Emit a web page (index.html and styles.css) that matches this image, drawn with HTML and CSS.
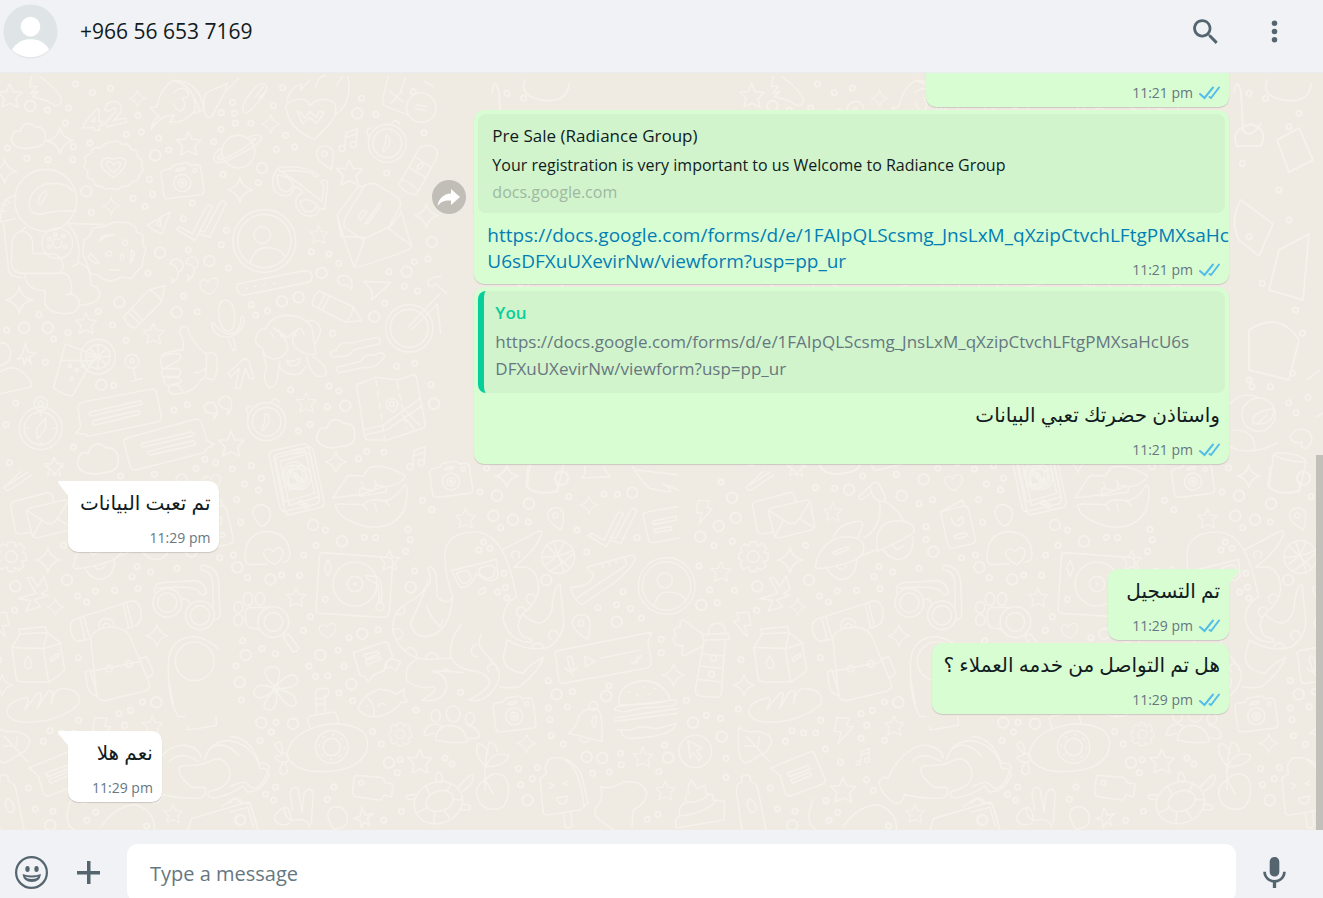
FILE: index.html
```html
<!DOCTYPE html>
<html lang="en">
<head>
  <meta charset="UTF-8" />
  <meta name="viewport" content="width=device-width, initial-scale=1.0"/>
  <title>Chat</title>
  <link rel="stylesheet" href="styles.css">
</head>
<body>
  <!-- shared icons -->
  <svg class="defs" aria-hidden="true">
    <marker id="ring-l" markerUnits="userSpaceOnUse" markerWidth="50" markerHeight="50" viewBox="-25 -25 50 50"><circle r="16" class="ring"/></marker>
    <marker id="ring-s" markerUnits="userSpaceOnUse" markerWidth="30" markerHeight="30" viewBox="-15 -15 30 30"><circle r="8" class="ring"/></marker>
    <symbol id="ticks" viewBox="0 0 21 14">
      <path d="M1 8l4.500 4L14 1.500M10.500 11l1.500 1L20 1.500" fill="none" stroke="#53bdeb" stroke-width="2" stroke-linecap="round"/>
    </symbol>
    <symbol id="star" viewBox="-40 -40 80 80" overflow="visible">
      <path d="M-3-36L8-12 34-10 16 9 22 35-2 23-26 34-20 8-38-11-13-12z"/>
    </symbol>
    <symbol id="spark" viewBox="-40 -40 80 80" overflow="visible">
      <path d="M0-38Q5-8 38 0Q7 6 0 38Q-7 7-38 0Q-6-7 0-38z"/>
    </symbol>
    <symbol id="heart" viewBox="-40 -40 80 80" overflow="visible">
      <path d="M4 30C-14 22-34 8-32-10C-30-26-8-28-2-14C4-32 30-36 34-16C36 2 18 20 4 30z"/>
    </symbol>
    <symbol id="camera" viewBox="-70 -60 140 120" overflow="visible">
      <path d="M-65-20Q-66-32-54-34L-34-38-26-50 16-56 26-48 44-50Q54-50 56-40L66 28Q67 40 56 42L-42 54Q-54 55-56 44zM-20-30Q-18-40 8-40Q10-30-20-30z"/>
      <circle r="26" cy="6"/><circle r="12" cy="6"/><circle r="4" cy="6"/><circle r="6" cx="38" cy="-32"/>
    </symbol>
    <symbol id="bubble" viewBox="-130 -70 260 140" overflow="visible">
      <path d="M-122 -10Q-122-26-106-30L96-68Q112-70 114-56L128 12Q130 26 116 30L-86 72Q-96 74-98 66L-128 64-114 44zM-84 0L66-34Q76-28 66-22L-82 12Q-94 8-84 0zM-76 26L60-4Q68 4 58 8L-74 40Q-82 34-76 26z"/>
    </symbol>
    <symbol id="clock" viewBox="-60 -70 120 140" overflow="visible">
      <circle r="57"/><circle r="43"/><path d="M-4-24Q6-26 8-4Q8 6-12 26Q-18 22-6 2zM-56-20Q-68-46-48-46M16-62Q24-76 38-58"/>
    </symbol>
    <symbol id="phone" viewBox="-80 -100 160 200" overflow="visible">
      <path d="M-72-60Q-74-74-60-78L28-98Q42-100 46-88L78 64Q80 78 68 82L-24 104Q-36 106-40 92zM-54-56L36-80 64 50-26 76zM-8-78L20-84"/><circle cx="2" cy="-8" r="36"/><path d="M-26 30L-28-10A28 28 0 1 1 0 22zM-12-20Q-10 6 16 6L14-4 4-4-4-14-4-22z"/><circle cx="24" cy="78" r="7"/>
    </symbol>
    <symbol id="note" viewBox="-30 -40 60 80" overflow="visible">
      <path d="M-12 24L-8-22 26-34 22 12M-6-8L24-18"/><circle cx="-20" cy="26" r="9"/><circle cx="14" cy="14" r="9"/>
    </symbol>
    <symbol id="profile" viewBox="-95 -95 190 190" overflow="visible">
      <circle r="94"/><circle r="80"/><circle cx="-6" cy="-18" r="25"/><path d="M-42 66Q-30 18 10 20Q50 22 64 48"/>
    </symbol>
    <symbol id="bolt" viewBox="-40 -50 80 100" overflow="visible">
      <path d="M-20-40L20-38 12-12 32-10-16 44-6 6-28 4z"/>
    </symbol>
    <symbol id="glasses" viewBox="-90 -80 180 160" overflow="visible">
      <circle cx="-52" cy="20" r="43"/><circle cx="-52" cy="20" r="29"/><circle cx="46" cy="58" r="43"/><circle cx="46" cy="58" r="29"/>
      <path d="M-12 14Q4 0 16 24M-90-10Q-96-34-70-40L30-46Q66-40 64-6Q52 2 42-14Q32-32-84-24M50-92Q98-92 102-40L106 54Q106 68 90 72M50-92Q44-76 60-76Q82-70 84-40L86 34"/>
    </symbol>
    <symbol id="doublecheck" viewBox="-75 -60 150 120" overflow="visible">
      <path d="M-74 26L-64 18-26 40 18-46Q28-50 34-42L-18 60zM-4 30L10 34 58-56Q68-62 76-52L26 50-4 40"/>
    </symbol>
    <symbol id="pin" viewBox="-30 -40 60 80" overflow="visible">
      <path d="M20 38Q-30 10-24-14Q-18-32 0-32Q26-32 26-4Q26 16 20 38z"/><circle cy="-8" r="8"/>
    </symbol>
    <symbol id="pencil" viewBox="-80 -40 160 80" overflow="visible">
      <path d="M-72-24L40-26 82 0 40 26-72 24Q-84 0-72-24zM40-26Q50 0 40 26M-52-24V24M-38-24V24"/>
    </symbol>
    <symbol id="cloud" viewBox="-50 -40 100 80" overflow="visible">
      <path d="M-32 34Q-56 20-44-2Q-38-18-22-12Q-12-42 12-34Q18-32 22-26Q54-28 54 4Q56 34 18 36Q-12 44-32 34z"/>
    </symbol>
    <symbol id="gear" viewBox="-50 -50 100 100" overflow="visible">
      <path d="M-10-46H10L14-32 28-42 42-26 34-14 46-10V12L32 14 40 30 24 42 12 34 8 46H-10L-14 32-30 40-42 26-34 12-46 8V-10L-34-14-40-30-26-40-14-32z"/><circle r="18"/>
    </symbol>
    <symbol id="mitts" viewBox="-200 -110 400 220" overflow="visible">
      <path d="M-6-46Q-14-76-56-82Q-110-84-160-8L-172 18Q-188 6-200 30Q-190 70-150 92Q-130 96-122 66Q-60 80-10 76Q14 70 4 44L-34 44Q-90-2-66-20L-6-24M-100-36Q-70-60-40-46L-14-34M4-40Q20-96 80-96Q150-84 170-12Q190-18 198 6Q176 60 132 58L118 40Q80 70 30 76Q4 70 20 56Q90 40 78-10Q60-56 20-34Q-6-24-6-24M14-66Q60-106 108-50"/>
    </symbol>
    <!-- one tile of the doodle wallpaper, repeated every 742px -->
    <g id="tile">
      <g transform="translate(0 80) scale(.3333)">
        <path class="dot-l" d="M91 78h0M259 334h0M358 667h0M1072 100h0M628 543h0M480 518h0M530 697h0M846 664h0M965 579h0M1036 977h0M143 743h0M466 226h0M1296 486h0M1220 575h0M1302 971h0M896 652h0M786 264h0M72 743h0M304 914h0M1123 710h0"/>
        <path class="dot-s" d="M277 38h0M206 84h0M331 25h0M227 12h0M142 90h0M196 129h0M414 106h0M424 156h0M476 174h0M506 210h0M379 163h0M220 200h0M144 239h0M81 235h0M218 239h0M270 189h0M22 204h0M435 379h0M399 355h0M448 298h0M458 343h0M274 397h0M698 67h0M664 98h0M706 130h0M753 130h0M703 100h0M663 148h0M641 185h0M820 77h0M848 23h0M857 166h0M829 208h0M884 201h0M775 308h0M669 283h0M577 369h0M550 416h0M679 451h0M664 494h0M565 510h0M685 564h0M444 579h0M551 648h0M592 695h0M117 704h0M20 750h0M204 758h0M161 777h0M295 694h0M338 735h0M378 781h0M341 916h0M522 990h0M562 974h0M136 847h0M47 970h0M18 1034h0M220 1101h0M28 1148h0M754 674h0M767 706h0M802 693h0M872 930h0M934 515h0M987 522h0M1016 550h0M1167 575h0M1243 545h0M1284 537h0M1213 619h0M1253 633h0M1154 670h0M998 760h0M1190 859h0M1245 850h0M1016 933h0M987 918h0M982 980h0M930 1033h0M895 1053h0M1101 1114h0M1152 1117h0M1076 1136h0M754 1157h0M697 1167h0M615 1138h0M588 1165h0M647 1148h0M1085 55h0M1128 103h0M1160 279h0M1272 159h0M1240 35h0M1293 914h0"/>
        <use href="#star" x="-8" y="7" width="80" height="80"/><use href="#star" x="528" y="150" width="80" height="80"/><use href="#star" x="1008" y="235" width="86" height="86"/><use href="#star" x="225" y="695" width="70" height="70"/><use href="#star" x="428" y="726" width="70" height="70"/><use href="#star" x="928" y="434" width="60" height="60"/><use href="#star" x="888" y="935" width="66" height="66"/><use href="#star" x="654" y="1050" width="84" height="84"/><use href="#star" x="132" y="1128" width="64" height="64"/>
        <use href="#spark" x="138" y="140" width="84" height="84"/><use href="#spark" x="386" y="28" width="54" height="54"/><use href="#spark" x="782" y="102" width="60" height="60"/><use href="#spark" x="680" y="290" width="80" height="80"/><use href="#spark" x="306" y="350" width="56" height="56"/><use href="#spark" x="16" y="618" width="84" height="84"/><use href="#spark" x="-24" y="236" width="76" height="76"/><use href="#spark" x="1242" y="370" width="74" height="74"/><use href="#spark" x="974" y="1112" width="68" height="68"/>
        <use href="#cloud" x="32" y="124" width="100" height="84"/><use href="#cloud" x="948" y="1014" width="112" height="90"/><use href="#cloud" x="230" y="1080" width="120" height="110"/>
        <use href="#camera" x="478" y="244" width="138" height="118"/><use href="#heart" x="588" y="586" width="76" height="66"/><use href="#profile" x="698" y="388" width="190" height="190"/><use href="#clock" x="1102" y="120" width="120" height="140"/><use href="#clock" x="740" y="955" width="120" height="140"/><use href="#phone" x="800" y="1090" width="160" height="200"/><use href="#bubble" x="226" y="926" width="260" height="140"/>
        <use href="#doublecheck" x="528" y="362" width="150" height="120"/><use href="#note" x="1016" y="140" width="60" height="80"/><use href="#note" x="1220" y="1094" width="60" height="80"/><use href="#pin" x="944" y="190" width="60" height="80"/>
        <g transform="translate(500 1092) scale(-1 1) rotate(26)"><use href="#bubble" x="-130" y="-70" width="260" height="140"/></g>
        <g transform="translate(438 676) rotate(-46)"><use href="#pencil" x="-80" y="-40" width="160" height="80"/></g><g transform="translate(1012 686) rotate(26)"><use href="#pencil" x="-84" y="-40" width="168" height="80"/></g>
        <!-- 42, badge, rocket, planet -->
        <path d="M290 86L252 132 250 144 282 142 284 152 298 150 298 138 308 134 306 124 296 124 298 90zM276 126L284 112 284 126zM314 90Q318 64 346 64Q372 74 362 98L340 122 376 114 380 126 322 140 314 130 346 96Q348 80 338 84L330 94z"/>
        <path d="M340 186Q356 178 366 194Q388 188 394 208Q416 210 412 230Q434 240 424 256Q436 272 418 284Q416 306 396 304Q388 324 366 318Q350 336 334 324Q314 334 306 318Q282 322 280 300Q256 296 264 274Q244 260 258 246Q248 226 272 220Q276 198 300 204Q316 186 340 186zM340 292Q300 266 304 248Q314 226 340 238Q366 226 378 244Q380 264 340 292zM340 278Q314 258 320 248Q330 240 342 254Q358 240 362 250Q362 262 340 278z"/>
        <path d="M454 148Q460 112 478 110L450 84 470 80Q484 20 520 2L548 12Q590 40 584 92Q556 130 508 126L524 106Q480 104 454 148zM520 2Q600 0 612 92M584 100L612 88M520 38Q550 12 564 38Q572 54 546 54Q562 74 548 90Q530 98 520 70M548 12Q580 34 600 94M612 60L616 40 682 10 676 34 636 108Q620 124 612 90zM682 30L716-6"/>
        <circle cx="715" cy="215" r="49"/><path d="M664 204Q630 228 646 246Q664 256 760 200Q796 176 778 166Q764 162 742 174M664 222Q648 234 656 238Q700 232 766 178Q770 170 756 178"/>
        <path d="M94-10L88 20 110 18 92 40 114 34 98 50 140 62 164 76Q180 80 184 64Q186 40 120-10M730 96Q720 70 770 18Q790 2 800 20Q804 40 750 92Q738 104 730 96zM766 50L790 20M776 56L798 34M860 90Q850 66 888 60Q920 50 930 76Q966 44 1004 70Q1016 100 990 130L944 178Q870 150 860 90zM892 94L908 132 930 112 950 130 972 98 958 94 948 112 930 94 914 114 904 98zM860 62Q872 20 904 12L902 30 930 0M1006 104Q1058 70 1044-10M946 22Q960-20 978-12M1008 20L1026-10M1164-10L1148 60Q1146 76 1160 80L1222 104"/>
        <circle cx="1264" cy="83" r="44"/><path d="M1250 74L1280 80M1246 86L1276 92M1272 4L1302 20M1168 34L1210 66M1206 32L1174 70M1200 40L1216-6"/>
        <!-- spaceman and moon -->
        <circle cx="137" cy="361" r="93"/><path d="M218 334Q200 304 138 312Q84 330 88 380Q98 414 140 398Q180 390 228 394M116 370Q110 360 130 336Q142 330 140 344L124 372zM50 346Q0 350 2 426L46 416M4 370L20 376M16 358L30 368M2 392L18 394M10 430L26 570Q30 592 66 594M76 442L62 454Q34 464 36 498L34 550Q38 580 68 580H174Q198 570 184 538L168 522 98 520 98 484Q90 456 68 454M202 430Q250 480 232 552L218 560M74 582Q76 630 136 632L134 670Q150 710 220 698Q244 680 234 656Q222 638 198 644L214 640Q218 570 174 580M238 550Q276 560 272 614Q300 622 300 646Q290 674 236 676M204 430L312 434"/>
        <circle cx="172" cy="490" r="46"/><circle cx="172" cy="490" r="14"/><circle cx="148" cy="500" r="5"/><circle cx="196" cy="500" r="5"/><circle cx="166" cy="464" r="5"/><circle cx="190" cy="468" r="5"/><circle cx="148" cy="478" r="5"/>
        <path d="M344 426L384 428 406 440 410 456 428 464 430 496 438 510 430 532 426 560 406 580 396 596 366 592 330 604 306 596 296 586 272 580 260 550 248 520 252 482 270 466 280 444 312 440zM300 484Q300 462 344 464Q316 466 300 484zM272 520L300 552Q276 550 264 532zM316 522Q330 506 336 520Q330 536 316 522zM360 534Q366 512 372 530Q366 548 360 534zM366 490Q376 470 382 488Q378 504 366 490zM394 510Q412 520 392 548zM330 570H358"/>
        <!-- shades, envelope, spray -->
        <path d="M832 268Q816 284 818 314Q824 346 856 348Q880 346 882 320Q896 318 908 338Q884 346 888 376Q900 412 938 408Q956 404 958 384L974 388 984 308Q974 292 962 306L972 318 966 364 912 322Q884 300 832 268L840 262Q914 254 956 286Q946 296 936 280Q900 268 840 274M832 284Q870 290 878 310Q876 336 854 336Q828 322 832 284zM902 362Q932 352 952 378Q940 400 916 394Q900 384 902 362z"/>
        <path d="M1092 320Q1104 306 1128 312L1190 350Q1206 360 1200 380L1166 442Q1120 462 1090 480L1034 442Q1028 430 1038 410L1092 320L1074 320 1012 404 1034 484 1062 560Q1066 570 1224 510Q1240 500 1232 490L1202 390M1012 410L1024 470 1096 472 1064 560M1166 446L1234 496M1166 446L1202 400M1074 410L1088 390 1100 396 1082 420zM1094 432L1138 370Q1146 372 1140 380L1104 430z"/>
        <path d="M1196 314L1258 206Q1274 190 1300 200Q1320 214 1308 238L1250 344Q1220 344 1196 314zM1244 230L1294 262M1226 262L1276 292M1206 300Q1230 304 1252 330M1252 270Q1250 252 1268 248Q1276 262 1252 270z"/>
        <path d="M442 436L510 396 486 462 460 450zM480 414L470 434 484 440zM534 576Q526 550 510 552A20 20 0 1 1 536 576Q534 600 514 608Q524 596 512 594M582 566Q574 548 558 552A18 18 0 1 1 584 566Q582 592 562 602Q570 586 562 586M652 1002Q650 1010 640 1018L646 1000Q612 1002 612 980Q620 964 640 968Q652 980 652 1002zM694 984Q692 996 682 1004L686 988Q658 986 656 966Q664 946 684 950Q698 960 694 984zM1054 628Q1044 612 1026 616Q1006 604 1018 590Q1040 580 1052 598Q1060 614 1054 628zM1092 604L1172 608 1116 660 1116 632zM712 612L914 572Q938 574 936 592Q934 606 920 608L730 646Q704 638 712 612zM738 626L742 624M764 620L768 618M790 616L794 614M820 612L826 610"/>
        <!-- mic, face, thumbs up, drink, map -->
        <path d="M656 700Q654 660 680 660Q700 664 704 710Q706 750 684 754Q660 748 656 700zM634 730Q640 770 684 772Q734 760 732 712Q724 704 722 720Q722 760 684 762Q654 752 642 730zM684 780L700 812 708 808 700 776M684 880L732 836 746 842 762 896 750 896 736 866 720 926 706 924 718 864 692 892z"/>
        <path d="M796 750Q812 706 862 706Q914 706 936 744L948 820Q940 826 920 822Q886 812 878 786Q876 760 900 744Q864 770 862 772Q840 756 820 744Q862 770 864 808Q850 836 820 838Q790 830 788 804Q768 800 766 776Q776 744 798 744M918 724Q960 714 962 756L948 790M788 814L800 864Q784 900 806 922Q830 924 832 896L840 844M940 830Q974 850 980 880Q972 894 950 888Q926 870 920 830M836 860Q860 890 900 882L918 860M860 840Q870 850 900 834Q902 856 878 858Q864 856 860 840zM810 754L820 770M838 750L844 772M880 754L888 768M904 746L912 764"/>
        <path d="M550 808Q554 776 538 756Q544 730 564 744Q568 780 620 824L618 886Q600 902 580 928Q540 944 516 942Q500 930 508 920Q488 914 492 894Q480 882 488 866Q474 840 492 820Q520 812 550 808zM488 830Q500 820 536 820Q550 830 536 842L490 866H536Q548 878 536 890H494M504 894Q544 888 544 906L510 916Q546 914 540 924L548 932M620 820Q648 814 650 832Q656 880 640 900L618 894M582 878Q606 880 620 860"/>
        <path d="M196 792L286 826 220 944Q210 956 160 924zM186 842H278"/><circle cx="294" cy="830" r="52"/><circle cx="294" cy="830" r="36"/><path d="M294 796V864M262 830H328M270 806L318 854M318 806L270 854"/><circle cx="210" cy="858" r="5"/><circle cx="230" cy="870" r="5"/><circle cx="250" cy="858" r="5"/><circle cx="216" cy="896" r="5"/>
        <circle cx="396" cy="844" r="21"/><circle cx="396" cy="842" r="6"/><path d="M400 866L408 900M394 904L426 896M76 790L84 816 108 820 88 832 94 852 80 834 72 856 70 834 52 838 68 822zM-10 790Q30 780 32 824Q26 856 0 856M0 876Q54 840 96 910Q96 920 88 922L-10 944"/>
        <circle cx="122" cy="1045" r="64"/><circle cx="122" cy="1045" r="49"/><circle cx="122" cy="971" r="20"/><circle cx="122" cy="971" r="8"/><path d="M136 1014L138 1044 112 1078 110 1044zM122 998V1006M122 1086V1094M78 1045H86M158 1045H166"/>
        <path d="M990 822Q1000 806 1010 812Q1020 780 1050 790L1132 772Q1146 776 1138 792L1060 810Q1048 834 1020 828Q1000 836 990 822zM1010 862L1082 844Q1098 818 1120 826Q1150 810 1154 828Q1150 840 1142 842Q1130 866 1094 862L1018 878Q1006 872 1010 862zM1070 914L1128 892 1196 900 1240 884Q1248 884 1250 896L1276 1034Q1276 1044 1264 1046L1162 1080 1104 1080Q1094 1078 1092 1060zM1094 1048L1150 1036 1260 956M1098 1064L1160 1050 1268 976M1206 1004L1242 1046M1218 994L1260 1036M1180 996Q1154 984 1160 964Q1176 946 1192 966Q1196 984 1180 996z"/><circle cx="1175" cy="972" r="7"/><path stroke-dasharray="18 16" d="M1128 900L1154 1076M1192 908L1220 1044"/>
        <circle cx="1228" cy="745" r="71"/><circle cx="1228" cy="745" r="57"/><path d="M1226 740L1320 640M1234 750L1312 672 1322 760M1322 590Q1280 590 1284 614Q1300 628 1306 610L1340 640"/>
      </g>
      <!-- right-hand strip, above the fold of the tile -->
      <g transform="translate(178 380) scale(.3333)">
        <circle cx="1016" cy="104" r="50"/><path d="M1000 130Q990 96 1062 86Q1060 140 1000 130zM1010 132L1042 104M930 70Q970 30 1016 54M930 200Q990 230 1070 190M940 150Q1006 150 1004 206M1110 170Q1130 136 1166 154Q1188 180 1160 204Q1138 206 1146 186Q1120 196 1110 170zM1060 224L1048 320Q1070 346 1138 336L1158 246M1060 224Q1100 246 1158 246Q1150 220 1070 218zM1160 0L1200-30M1190 110L1209 100"/><circle cx="1152" cy="294" r="20"/>
        <path class="dot-s" d="M996 20h0M1051 20h0M1164 52h0M1106 68h0M1128 98h0M926 264h0"/>
        <use href="#spark" x="950" y="252" width="72" height="72"/>
      </g>
      <g class="strip" transform="translate(487 80)">
        <path d="M5 12Q8-4 12 12L14 50Q20 60 32 44M38 0Q32 16 54 20Q80 24 82 4M8 66Q0 50 22 44Q40 50 32 66zM12 120Q0 140 10 160L30 176 44 144zM50 170L80 154 74 220 40 210zM20 250Q50 230 70 260L60 300 20 290zM48 60L70 48 84 80 60 92z"/>
        <path class="dot-s" transform="scale(.3333)" d="M60 40h0M110 55h0M180 140h0M210 100h0M40 250h0M150 330h0M180 420h0M60 470h0M100 610h0M200 690h0M60 900h0M190 880h0M220 760h0"/>
      </g>
      <g transform="translate(230 470) scale(.3333)">
        <path class="dot-l" d="M336 214h0M397 491h0M271 555h0M47 555h0M29 637h0M121 328h0M249 165h0M364 643h0M94 758h0M477 878h0M897 101h0M801 77h0M790 137h0M849 149h0M542 352h0M949 330h0M980 673h0M1129 678h0M1160 455h0M1070 861h0M1117 864h0M1207 68h0M1315 863h0M893 991h0M189 761h0M22 292h0"/>
        <path class="dot-s" d="M43 42h0M94 25h0M85 60h0M20 89h0M32 157h0M10 255h0M52 323h0M155 315h0M209 316h0M221 255h0M258 226h0M286 180h0M403 202h0M437 203h0M220 481h0M241 440h0M324 541h0M357 503h0M342 589h0M136 551h0M96 536h0M38 512h0M18 588h0M257 619h0M237 588h0M293 617h0M327 669h0M368 692h0M444 479h0M286 388h0M527 244h0M541 209h0M534 178h0M606 119h0M577 91h0M554 303h0M750 66h0M812 173h0M895 156h0M1017 80h0M1041 180h0M1122 72h0M1162 73h0M1070 246h0M1221 203h0M1179 365h0M1104 413h0M1160 404h0M1202 416h0M1234 444h0M1294 508h0M1294 548h0M955 632h0M1027 665h0M1012 710h0M955 714h0M960 749h0M964 797h0M1000 823h0M1137 647h0M1172 849h0M1174 884h0M1138 906h0M1088 910h0M866 896h0M922 893h0M907 926h0M872 944h0M692 667h0M558 720h0M454 822h0M428 785h0M510 869h0M502 908h0M645 864h0M666 882h0M514 1024h0M461 1051h0M292 988h0M312 951h0M137 951h0M107 973h0M131 990h0M90 812h0M34 690h0M138 757h0M124 786h0M803 366h0M826 352h0M831 384h0M822 310h0M760 216h0M747 240h0M780 235h0M1304 825h0M1287 905h0M1252 1048h0M1284 1033h0"/>
        <use href="#phone" x="124" y="-70" width="160" height="200"/><use href="#camera" x="594" y="-30" width="138" height="118"/><use href="#camera" x="784" y="674" width="138" height="118"/>
        <use href="#star" x="676" y="112" width="66" height="66"/><use href="#star" x="448" y="238" width="66" height="66"/><use href="#star" x="168" y="350" width="64" height="64"/><use href="#star" x="532" y="834" width="80" height="80"/><use href="#star" x="1208" y="828" width="66" height="66"/><use href="#star" x="1276" y="930" width="64" height="64"/><use href="#heart" x="260" y="452" width="64" height="60"/>
        <use href="#spark" x="1048" y="76" width="58" height="58"/><use href="#spark" x="796" y="-16" width="70" height="70"/><use href="#spark" x="860" y="790" width="60" height="60"/><use href="#spark" x="1296" y="580" width="70" height="70"/><use href="#pin" x="946" y="106" width="60" height="76"/><use href="#pin" x="1020" y="426" width="66" height="84"/>
        <use href="#doublecheck" x="1074" y="112" width="146" height="120"/><use href="#profile" x="1224" y="262" width="172" height="172"/><use href="#gear" x="474" y="756" width="74" height="74"/>
        <!-- lips, record player -->
        <path d="M308 84L354 16 400 18 418-8Q470-20 526 18Q510 50 460 50L390 74 308 84zM388 76L390 54 430 62 440 46 470 50 468 66 392 78M394 36L402 54M434 30L440 48M318 112Q310 100 340 102L400 104Q420 82 466 94Q500 84 524 44Q540 60 522 120Q490 180 410 170Q330 150 318 112zM400 104L412 122M434 100L440 122M466 90L478 108M70 136Q64 104 96 104Q126 110 120 142Q98 196 70 136zM60 284Q40 280 46 250Q50 190 110 184Q180 190 180 256Q176 276 160 276M60 284L112 282M134 284Q96 264 102 244Q114 230 130 244Q148 222 160 244Q160 268 134 284z"/>
        <path d="M276 248L474 262Q490 264 488 280L478 426Q476 442 460 442L268 430Q256 428 258 414L268 262Q270 248 276 248zM294 270L304 294 294 320 284 294zM408 316L440 320Q460 330 454 400L448 396 444 344 412 326z"/><circle cx="375" cy="342" r="66"/><circle cx="375" cy="342" r="23"/><circle cx="450" cy="410" r="12"/><circle cx="375" cy="342" r="3"/>
        <!-- paw camera, flower, note -->
        <circle cx="130" cy="456" r="46"/><circle cx="130" cy="456" r="28"/><ellipse cx="90" cy="387" rx="14" ry="19"/><ellipse cx="54" cy="387" rx="14" ry="19"/><ellipse cx="25" cy="412" rx="14" ry="17"/><ellipse cx="25" cy="450" rx="14" ry="17"/><path d="M114 412H60Q44 414 46 436Q44 470 62 474L90 478M158 498L188 544Q200 550 206 534L176 492zM136 650Q80 600 124 590Q166 588 136 650Q190 590 204 632Q200 656 136 656Q210 670 196 706Q170 720 136 656Q150 710 120 720Q78 720 136 656Q90 700 72 674Q70 630 136 656"/><circle cx="138" cy="656" r="9"/>
        <path d="M370 548L464 516Q472 514 476 526L488 560 466 580 462 602 432 614 414 634 404 620 390 616zM402 554L442 544 448 552 408 566zM406 572L450 560 452 568 412 584zM470 574L484 566 512 574 498 602 482 590 468 596z"/>
        <!-- octopus -->
        <path d="M668 380Q640 300 646 240Q660 184 740 186Q812 190 846 320L860 380Q820 400 820 450Q840 520 904 516Q910 506 880 500Q850 470 880 430Q920 400 926 360Q926 296 880 290L852 292M664 302L800 268 804 320Q784 348 740 310Q720 360 690 350L664 302zM680 310Q724 290 722 326Q700 360 680 310zM748 296Q790 276 794 296Q796 330 766 324Q744 314 748 296zM816 240L920 186Q940 176 934 196Q910 250 852 290M668 380Q650 410 622 380L618 310Q600 280 594 296Q610 340 590 350L542 460Q550 500 590 500Q660 490 668 380M594 330Q590 370 530 400Q480 430 490 490Q520 570 600 568L664 564M590 408Q600 440 630 470L640 450M694 464Q656 510 662 560Q680 600 740 604Q790 620 774 650Q752 674 716 690Q760 700 790 660Q820 620 800 590L754 536Q740 520 754 494M560 568Q520 590 530 630Q560 660 610 650Q630 660 576 690Q640 700 650 650Q650 610 606 604Q630 600 700 608M832 510L820 560Q820 600 880 610Q890 590 940 562Q930 600 870 650Q830 656 810 650M832 510Q900 550 960 530Q1010 490 1000 440L990 342Q970 350 966 420Q940 490 880 434M500 430A14 14 0 0 0 520 410M492 480A16 16 0 1 1 500 508M524 544A18 18 0 0 1 558 560M588 566A18 18 0 0 1 624 566M748 374Q740 360 766 352Q770 370 748 374zM850 264A12 12 0 1 1 866 262M874 440A14 14 0 1 1 886 420M900 400A14 14 0 1 1 916 380M906 530A18 18 0 0 1 940 534M964 508A14 14 0 1 1 984 494M634 604A16 16 0 0 1 660 604M744 560A18 18 0 0 1 740 524M778 606A14 14 0 1 1 800 600"/>
        <circle cx="985" cy="261" r="49"/><path d="M950 226L1020 296M948 284Q990 260 1002 214M960 304Q1000 280 1030 250M970 214L1004 308M936 262Q990 262 1030 240"/>
        <!-- shoe, voice message, burger -->
        <path d="M1022 352Q1090 350 1090 310Q1066 300 1076 290L1200 256Q1220 252 1214 274Q1190 310 1150 340L1056 404Q1030 390 1022 352zM1040 384L1190 286Q1190 270 1178 262M1118 284L1118 292M1138 278L1138 286M1158 272L1158 280M976 548Q970 552 984 542L1266 486 1254 516 1264 576Q1264 590 1250 594L1000 640Q988 640 986 628zM1012 564Q1016 554 1026 562L1032 590Q1030 604 1020 598zM1006 594Q1020 616 1040 594M1024 606L1030 616M1064 558L1096 574 1068 590zM1114 564L1230 540M1204 574L1212 582 1224 558M1220 578L1234 556M1168 704Q1160 640 1240 632Q1300 634 1322 690Q1270 706 1168 704M1160 710L1330 690Q1350 690 1330 708L1240 714 1180 726 1154 720zM1154 744L1340 716M1154 754L1340 730M1160 780L1200 780 1230 770 1280 776 1320 766 1340 760Q1330 800 1200 806Q1170 800 1176 780M1196 666h4M1220 676h4M1240 652h4M1256 672h4M1274 656h4"/>
        <path d="M1240 140Q1238 128 1252 126L1344 110M1240 140L1256 210Q1260 220 1272 218L1350 204M1268 154L1338 138 1340 150 1270 164zM1272 178L1322 170 1326 180 1274 188zM1014 790Q1040 776 1046 740Q1064 710 1100 716Q1120 726 1116 814zM1048 806Q1060 824 1078 812M1086 750Q1090 734 1100 740L1096 770Q1086 776 1086 750z"/><circle cx="1090" cy="708" r="13"/>
        <!-- fish, submarine, group, turtle, fruit, ice cream -->
        <path d="M384 716Q400 670 450 658Q490 662 500 674L522 656 522 680 534 694 512 698Q480 740 430 740Q400 738 384 716zM412 682Q440 710 430 738M444 710Q450 694 466 704M408 708h4M170 858Q180 780 300 762Q400 760 412 810Q420 880 330 900Q200 920 170 858zM240 776L232 746Q236 738 250 736L310 726Q324 728 326 762M260 736L256 670Q258 652 280 656Q300 650 296 672Q294 684 284 676L286 728M258 686H284M260 702H284M168 850Q156 850 150 858Q120 856 150 876Q190 880 168 850M156 852Q120 820 148 816Q160 826 156 852M158 880Q140 910 160 914Q180 910 166 880"/>
        <circle cx="305" cy="831" r="49"/><circle cx="305" cy="831" r="26"/><circle cx="305" cy="831" r="38" stroke-dasharray="5 25"/>
        <ellipse cx="670" cy="732" rx="21" ry="24"/><ellipse cx="617" cy="738" rx="14" ry="18"/><ellipse cx="720" cy="746" rx="14" ry="18"/><path d="M616 810Q620 766 662 766Q706 770 712 816Q660 822 616 810zM612 790Q590 800 582 794Q586 762 622 762L634 768M716 804Q740 810 748 800Q746 770 710 766"/>
        <path d="M378 916L454 922Q464 926 464 938L490 942 484 982 462 974Q458 992 446 990L376 980Q368 976 368 966L372 926Q374 916 378 916zM188 1020L180 970Q186 944 204 956L216 1026 222 970Q240 946 250 970L244 1060M184 1050Q180 1010 164 1012Q130 1030 134 1050Q150 1074 180 1060M164 1012Q160 1040 184 1052Q230 1040 240 1070M296 1050Q286 1010 324 1010Q360 1020 350 1060Q336 1080 310 1076zM396 1012L406 1036 430 1030 412 1046 420 1066 402 1056 394 1074 390 1050 372 1046 390 1038z"/><circle cx="394" cy="938" r="7"/>
        <ellipse cx="625" cy="998" rx="74" ry="62" transform="rotate(-20 625 998)"/><ellipse cx="629" cy="993" rx="42" ry="30" transform="rotate(-20 629 993)"/><path d="M620 936Q614 900 630 908Q644 924 634 938M556 974Q520 974 530 984Q540 992 552 988M686 950Q730 900 730 920Q732 940 698 964M696 1004Q730 1000 718 1020L690 1018M560 1030L594 1012M612 1060L614 1024M658 1044L642 1020M696 990L668 988M664 940L650 966M588 950L600 974M766 960Q760 880 778 816Q800 820 802 846M766 890Q730 850 744 820Q764 820 774 850M766 890Q790 840 836 856Q830 890 766 890M766 930Q790 900 824 920Q850 960 820 1010Q780 1030 750 1000Q724 950 766 930L790 972M940 1030L930 924L950 912Q940 880 962 864Q1030 856 1056 920L1074 1000 1050 1020 950 1036zM1004 870Q1050 890 1062 1010M1000 1030L1006 1072Q1018 1080 1026 1066L1022 1022M956 940L972 946 960 956M1012 934L1000 942 1012 946M980 984L1012 978Q1012 1004 996 1002Q984 1000 980 984zM1112 950Q1140 960 1180 936Q1240 930 1250 970Q1250 1000 1210 1020L1206 1070M1112 950Q1120 980 1108 1000Q1080 1030 1110 1050L1150 1080M0 800Q60 800 88 880Q110 876 118 890Q100 950 70 956L42 936Q20 940 0 950M0 1000Q20 970 40 1000L60 1000 84 1080M0 1026L54 1012 70 1070"/><circle cx="30" cy="1050" r="16"/>
        <path d="M894-10L888 50Q920 80 984 60L980 40M1056 24Q1070 10 1064-10M1056 24L1140 20 1120-10M1208-10Q1230 30 1260 56L1320 66Q1330 60 1300 42L1346 60M1220 0L1340 14"/><circle cx="994" cy="25" r="20"/>
      </g>
      <g transform="translate(-72 470) scale(.3333)">
        <path class="dot-l" d="M186 83h0M91 200h0M761 28h0M197 143h0M537 59h0M695 77h0M790 245h0M417 330h0M262 349h0M94 405h0M685 697h0M69 758h0M155 800h0M146 168h0M367 1066h0"/>
        <path class="dot-s" d="M153 36h0M132 227h0M187 214h0M407 226h0M87 288h0M119 360h0M194 361h0M142 398h0M260 421h0M449 378h0M502 363h0M560 361h0M476 396h0M630 356h0M612 320h0M627 290h0M668 306h0M747 295h0M875 263h0M768 170h0M768 208h0M747 101h0M788 89h0M437 53h0M494 55h0M578 18h0M679 13h0M451 563h0M213 569h0M205 717h0M152 745h0M109 736h0M49 691h0M168 865h0M168 922h0M346 814h0M366 782h0M401 789h0M437 789h0M452 751h0M466 837h0M512 877h0M573 731h0M607 721h0M590 766h0M573 805h0M644 811h0M644 696h0M590 929h0M610 961h0M468 992h0M503 1027h0M477 1051h0M375 1024h0M322 1017h0M301 954h0M656 1068h0"/>
        <use href="#star" x="460" y="96" width="60" height="60"/><use href="#star" x="122" y="272" width="66" height="66"/><use href="#star" x="642" y="734" width="66" height="66"/><use href="#star" x="480" y="918" width="84" height="84"/><use href="#star" x="706" y="1000" width="62" height="62"/>
        <use href="#spark" x="320" y="230" width="80" height="80"/><use href="#spark" x="356" y="384" width="54" height="54"/><use href="#spark" x="652" y="462" width="70" height="70"/><use href="#spark" x="188" y="612" width="68" height="68"/><use href="#spark" x="350" y="-40" width="60" height="60"/>
        <use href="#gear" x="202" y="212" width="96" height="96"/><use href="#heart" x="816" y="6" width="68" height="64"/><use href="#bolt" x="68" y="80" width="66" height="88"/><use href="#bolt" x="482" y="730" width="74" height="100"/><use href="#note" x="550" y="830" width="60" height="60"/><use href="#glasses" x="680" y="298" width="180" height="160"/><use href="#mitts" x="626" y="798" width="400" height="220"/>
        <g transform="translate(218 460) scale(-1 1)"><use href="#bolt" x="-36" y="-42" width="72" height="88"/></g>
        <!-- envelope, scooter, card -->
        <path d="M312 186L276 192Q264 192 262 182L248 108Q248 96 258 94L358 68Q370 66 374 80L378 98M296 128Q294 116 306 114L410 90Q420 90 422 102L434 168Q434 178 424 180L326 204Q316 204 312 194zM298 122L350 156Q360 164 374 160Q384 156 418 98M316 198L340 152M432 172L388 146M228 52L280 4M228 52Q234 66 248 58L312 14M242 44L300 6"/>
        <path d="M490 200Q510 160 560 154Q580 152 578 168L564 202M436 290Q444 230 500 204Q580 190 582 236Q580 260 550 272Q490 294 440 296zM486 248L530 230Q540 234 530 240L494 254zM580 256L622 238M470 294Q490 330 520 328Q560 320 560 268M500 290Q516 308 530 288M622 238Q610 150 690 152Q740 160 732 186Q720 200 622 244M640 240Q660 270 690 268Q730 260 730 200M670 226Q680 250 700 226M582 204Q640 170 628 92M640 92Q680 110 700 152M566 80L602 46Q616 30 626 40L646 80Q650 94 630 94Q606 86 600 50M566 80Q568 94 584 84L604 66M812 126L878 90 886 108M812 126L832 218Q836 238 852 234L904 222Q918 218 916 206L896 118Q892 106 880 108L812 126M844 144Q850 172 872 166Q888 156 876 140L864 152M854 196L886 188Q896 192 888 200L860 206Q850 204 854 196zM270 386L324 370 298 324 310 322 330 350 348 318 360 358 340 372 360 376 320 390 338 410 294 424 308 392z"/>
        <!-- lighthouse, carton, bag -->
        <path d="M96 494L176 490 178 508 100 510zM116 490Q116 460 142 460Q168 460 166 490M102 512L76 660Q76 676 90 678L140 682Q154 680 154 670L166 512M94 552L162 558M90 588L160 596M82 628L156 636M96 490L40 450Q26 450 32 470Q0 476 18 494Q0 510 20 524Q30 530 40 528Q30 550 40 558L98 528M272 478L352 470 358 488 276 492zM276 492L252 532 346 536 358 488 400 520 346 536 362 636Q408 610 410 596L396 520M252 532L264 622Q266 636 284 636L362 636M290 586Q286 576 300 558Q314 580 310 590Q300 604 290 586zM366 566L392 550 394 558 370 574z"/><circle cx="130" cy="564" r="9"/><circle cx="124" cy="613" r="9"/>
        <path d="M440 448L606 394Q630 386 638 420Q644 460 620 468L596 476M440 448Q420 458 430 490Q440 520 460 512L482 508M456 446L472 510M468 442L484 500M586 404L602 474M596 400L614 470M514 474Q510 444 536 446Q560 448 558 470M524 472Q530 450 548 468M488 504Q500 470 560 472Q600 476 610 510L664 640Q670 660 640 666L530 692Q510 692 506 676zM490 604L632 576M472 606L486 600 508 676Q484 674 478 650zM636 566L656 560 676 606Q674 620 658 622"/><circle cx="543" cy="596" r="10"/><circle cx="603" cy="582" r="10"/>
        <!-- bread, cursor, leaf, spaceman -->
        <path d="M238 730Q230 700 290 684Q310 674 290 720L330 668Q350 660 328 716L360 664Q382 654 370 700Q380 650 410 656Q460 660 454 700Q430 730 360 750Q250 770 238 730zM54 812L96 834 80 842 94 864 86 872 70 848 60 864zM206 772Q230 790 260 784Q300 790 306 812Q296 850 264 858Q240 880 222 878Q200 860 206 772zM230 800L300 876M226 828L254 828M268 800L264 830"/><circle cx="76" cy="844" r="49"/>
        <path d="M302 894L420 846Q430 842 434 854L466 928Q466 938 458 942L360 978Q350 978 346 970L330 916zM352 910L416 886 422 896 360 920zM362 930L420 906 424 916 368 940zM770 740L750 740Q722 690 722 620Q710 500 800 500Q850 510 872 540M722 630L736 700"/><circle cx="800" cy="574" r="58"/>
        <!-- ice cream, bottle, balloon -->
        <path d="M64 930L82 956 106 946 108 970 130 976 128 990 164 994 162 1050 20 1074Q10 1050 30 1038Q20 1010 50 996Q40 976 56 970Q50 950 64 930zM50 996Q90 1000 118 972M30 1038Q110 1030 140 990M200 970Q196 940 216 936L214 920Q230 910 240 920L242 934Q262 940 264 960L288 1080M200 970L216 1080M232 1004Q232 992 240 986Q260 1000 258 1020Q240 1040 232 1004zM430 988Q400 1060 440 1080M520 1070Q560 1010 620 1004Q680 1020 680 1080M780 1080L790 1046 960 996Q970 998 984 1060M880 1010L920 984 940 1000M780 770L780 780 866 766 864 740"/><circle cx="938" cy="1050" r="14"/>
      </g>
    </g>
  </svg>

  <div class="app">
    <header class="topbar">
      <svg class="avatar" viewBox="0 0 56 56" aria-hidden="true">
        <circle cx="28" cy="28" r="27.500" fill="#dfe5e7"/>
        <circle cx="28" cy="23" r="10" fill="#fff"/>
        <path d="M9 46.500C15 38 21 36 28 36s14 2 19 10.500a27 27 0 0 1-38 0z" fill="#fff"/>
      </svg>
      <h1 class="contact">+966 56 653 7169</h1>
      <button class="icon-btn" aria-label="Search">
        <svg viewBox="0 0 24 24"><path d="M15.900 14.300H15l-.3-.3c1-1.100 1.600-2.700 1.600-4.300 0-3.700-3-6.700-6.700-6.700S3 6 3 9.700s3 6.700 6.700 6.700c1.600 0 3.200-.6 4.300-1.600l.3.3v.8l5.100 5.100 1.500-1.500-5-5.200zm-6.200 0c-2.600 0-4.600-2.100-4.600-4.600s2.100-4.600 4.600-4.600 4.600 2.100 4.600 4.600-2 4.600-4.600 4.600z"/></svg>
      </button>
      <button class="icon-btn" aria-label="Menu">
        <svg viewBox="0 0 24 24"><circle cx="12" cy="6" r="2"/><circle cx="12" cy="12" r="2"/><circle cx="12" cy="18" r="2"/></svg>
      </button>
    </header>

    <main class="chat">
      <svg class="wallpaper" aria-hidden="true">
        <g transform="translate(0 -73)"><use href="#tile"/><use href="#tile" x="742"/></g>
      </svg>

      <div class="messages">
        <div class="row out">
          <div class="bubble short">
            <p class="text">&nbsp;</p>
            <div class="time">11:21 pm <svg class="ticks"><use href="#ticks"/></svg></div>
          </div>
        </div>

        <div class="row out">
          <button class="forward" aria-label="Forward">
            <svg viewBox="0 0 34 34"><path d="M19 9l9 8-9 8v-4.500c-6-.5-10 1-13.500 5.500 1-7.500 6-12 13.500-12.500z"/></svg>
          </button>
          <div class="bubble wide">
            <div class="preview">
              <div class="preview-title">Pre Sale (Radiance Group)</div>
              <div class="preview-desc">Your registration is very important to us Welcome to Radiance Group</div>
              <div class="preview-site">docs.google.com</div>
            </div>
            <a class="link" href="#">https://docs.google.com/forms/d/e/1FAIpQLScsmg_JnsLxM_qXzipCtvchLFtgPMXsaHc<br>U6sDFXuUXevirNw/viewform?usp=pp_ur</a>
            <div class="time over">11:21 pm <svg class="ticks"><use href="#ticks"/></svg></div>
          </div>
        </div>

        <div class="row out">
          <div class="bubble wide">
            <div class="quote">
              <div class="quote-name">You</div>
              <div class="quote-text">https://docs.google.com/forms/d/e/1FAIpQLScsmg_JnsLxM_qXzipCtvchLFtgPMXsaHcU6s<br>DFXuUXevirNw/viewform?usp=pp_ur</div>
            </div>
            <p class="text" dir="rtl" lang="ar">واستاذن حضرتك تعبي البيانات</p>
            <div class="time">11:21 pm <svg class="ticks"><use href="#ticks"/></svg></div>
          </div>
        </div>

        <div class="row in first">
          <div class="bubble">
            <svg class="tail" viewBox="0 0 11 17"><path d="M1 0h10v16L1 3Q-1 0 1 0z"/></svg>
            <p class="text" dir="rtl" lang="ar">تم تعبت البيانات</p>
            <div class="time">11:29 pm</div>
          </div>
        </div>

        <div class="row out first">
          <div class="bubble">
            <svg class="tail" viewBox="0 0 11 17"><path d="M10 0H0v16L10 3Q12 0 10 0z"/></svg>
            <p class="text" dir="rtl" lang="ar">تم التسجيل</p>
            <div class="time">11:29 pm <svg class="ticks"><use href="#ticks"/></svg></div>
          </div>
        </div>

        <div class="row out">
          <div class="bubble">
            <p class="text" dir="rtl" lang="ar">هل تم التواصل من خدمه العملاء ؟</p>
            <div class="time">11:29 pm <svg class="ticks"><use href="#ticks"/></svg></div>
          </div>
        </div>

        <div class="row in first">
          <div class="bubble">
            <svg class="tail" viewBox="0 0 11 17"><path d="M1 0h10v16L1 3Q-1 0 1 0z"/></svg>
            <p class="text" dir="rtl" lang="ar">نعم هلا</p>
            <div class="time">11:29 pm</div>
          </div>
        </div>
      </div>
      <div class="scroll-thumb"></div>
    </main>

    <footer class="composer">
      <button class="icon-btn" aria-label="Emoji">
        <svg viewBox="0 0 33 33"><circle cx="16.500" cy="16.500" r="15.400" fill="none" stroke="#54656f" stroke-width="2.200"/><ellipse cx="12.500" cy="13" rx="2.200" ry="3"/><ellipse cx="21.500" cy="13" rx="2.200" ry="3"/><path d="M7.500 18q9 3 18.500 0-1 8-9.200 8T7.500 18z"/><path d="M10 20.500q7 1.800 13.500 0-2 2.500-6.700 2.500T10 20.500z" fill="#f0f2f5"/></svg>
      </button>
      <button class="icon-btn" aria-label="Attach">
        <svg viewBox="0 0 33 33"><path d="M15 5h3.500v10H28v3.500h-9.500V28H15v-9.500H5V15h10z"/></svg>
      </button>
      <input class="message-input" type="text" placeholder="Type a message" aria-label="Type a message">
      <button class="icon-btn" aria-label="Voice message">
        <svg viewBox="0 0 24 24"><path d="M12 14.900c2 0 3.500-1.500 3.500-3.500V4.300c0-2-1.500-3.500-3.500-3.500S8.500 2.300 8.500 4.300v7.100c0 2 1.500 3.500 3.500 3.500zm6.200-3.500c0 3.500-2.900 6-6.200 6s-6.200-2.500-6.200-6h-2c0 4 3.200 7.300 7 7.900v3.900h2.400v-3.900c3.900-.6 7-3.900 7-7.900z"/></svg>
      </button>
    </footer>
  </div>
</body>
</html>
```
FILE: styles.css
```css
* {
  box-sizing: border-box;
}

body {
  margin: 0;
  font-family: "Open Sans", "Noto Sans", "DejaVu Sans", sans-serif;
  color: #111b21;
  background: #f0f2f5;
}

.defs {
  position: absolute;
  width: 0;
  height: 0;
}

.app {
  display: flex;
  flex-direction: column;
  height: 100vh;
  overflow: hidden;
}

.topbar {
  display: flex;
  align-items: center;
  flex: 0 0 73px;
  padding: 0 32px 10px 3px;
  background: #f0f2f5;
  border-bottom: 1px solid #e9edef;
}

.avatar {
  width: 55px;
  height: 55px;
}

.contact {
  flex: 1;
  margin: 0 0 0 22px;
  font-size: 21px;
  font-weight: 400;
}

.icon-btn {
  flex: none;
  width: 33px;
  height: 33px;
  padding: 0;
  border: none;
  background: none;
  cursor: pointer;
}

.icon-btn svg {
  display: block;
  width: 33px;
  height: 33px;
  fill: #54656f;
}

.topbar .icon-btn + .icon-btn {
  margin-left: 36px;
}

.chat {
  position: relative;
  flex: 1;
  min-height: 0;
  overflow: hidden;
  background: #efeae2;
}

.wallpaper {
  position: absolute;
  top: 0;
  left: 0;
  width: 100%;
  height: 100%;
  fill: none;
  stroke: #f5f1eb;
  stroke-width: 5;
  stroke-linecap: round;
  stroke-linejoin: round;
}

.strip {
  stroke-width: 2;
}

/* the scattered rings are markers on zero-length segments */
.ring {
  fill: none;
  stroke: #f5f1eb;
  stroke-width: 5;
}

.dot-l,
.dot-s {
  stroke: none;
}

.dot-l {
  marker: url(#ring-l);
}

.dot-s {
  marker: url(#ring-s);
}

.messages {
  position: relative;
  display: flex;
  flex-direction: column;
  justify-content: flex-end;
  gap: 3px;
  height: 100%;
  padding: 0 94px 28px 68px;
}

.row {
  display: flex;
  flex: none;
  align-items: center;
}

.row.out {
  justify-content: flex-end;
}

.row.first {
  margin-top: 14px;
}

.bubble {
  position: relative;
  max-width: 65%;
  padding: 0 4px 4px;
  border-radius: 10px;
  background: #fff;
  box-shadow: 0 1px 1px rgba(11, 20, 26, 0.16);
}

.out .bubble {
  background: #d9fdd3;
}

.bubble.short {
  min-width: 303px;
}

.bubble.wide {
  width: 65%;
  padding-top: 4px;
}

.in.first .bubble {
  border-top-left-radius: 0;
}

.out.first .bubble {
  border-top-right-radius: 0;
}

.tail {
  position: absolute;
  top: 0;
  width: 11px;
  height: 17px;
  fill: #fff;
}

.in .tail {
  left: -10px;
}

.out .tail {
  right: -10px;
  fill: #d9fdd3;
}

.text {
  margin: 0;
  padding: 8px 5px 0 8px;
  font-size: 20px;
  line-height: 28px;
}

.time {
  display: flex;
  justify-content: flex-end;
  align-items: center;
  gap: 6px;
  margin-top: 11px;
  padding: 0 5px 0 20px;
  font-size: 14px;
  line-height: 20px;
  color: #667781;
}

.time.over {
  margin-top: -14px;
}

.ticks {
  width: 21px;
  height: 14px;
}

.preview,
.quote {
  border-radius: 8px;
  background: #d1f4cc;
}

.preview {
  padding: 8px 14px 7px;
  line-height: 27px;
}

.preview-title {
  margin-bottom: 2px;
  font-size: 17px;
}

.preview-desc {
  font-size: 16px;
  line-height: 28px;
}

.preview-site {
  font-size: 16px;
  color: #9fb8a2;
}

.link {
  display: block;
  padding: 9px 0 0 9px;
  font-size: 19px;
  line-height: 26px;
  color: #027eb5;
  text-decoration: none;
  white-space: nowrap;
}

.quote {
  padding: 8px 11px 11px;
  border-left: 6px solid #06cf9c;
  font-size: 17px;
  line-height: 27px;
  color: #667781;
  white-space: nowrap;
}

.quote-name {
  margin-bottom: 2px;
  font-weight: 600;
  color: #06cf9c;
}

.forward {
  width: 34px;
  height: 34px;
  margin-right: 8px;
  padding: 0;
  border: none;
  border-radius: 50%;
  background: #c1beb8;
  cursor: pointer;
}

.forward svg {
  display: block;
  width: 34px;
  height: 34px;
  fill: #fff;
}

.scroll-thumb {
  position: absolute;
  right: 0;
  bottom: 0;
  width: 7px;
  height: 375px;
  background: #c1c0ba;
}

.composer {
  display: flex;
  align-items: flex-start;
  flex: 0 0 68px;
  padding: 14px 32px 0 15px;
  background: #f0f2f5;
  overflow: hidden;
}

.composer .icon-btn {
  margin-top: 12px;
}

.composer .icon-btn + .icon-btn {
  margin-left: 24px;
}

.message-input {
  flex: 1;
  min-width: 0;
  height: 58px;
  margin: 0 22px;
  padding: 0 23px;
  border: none;
  border-radius: 11px;
  outline: none;
  background: #fff;
  font-family: inherit;
  font-size: 20px;
  color: #111b21;
}

.message-input::placeholder {
  color: #667781;
}
```
